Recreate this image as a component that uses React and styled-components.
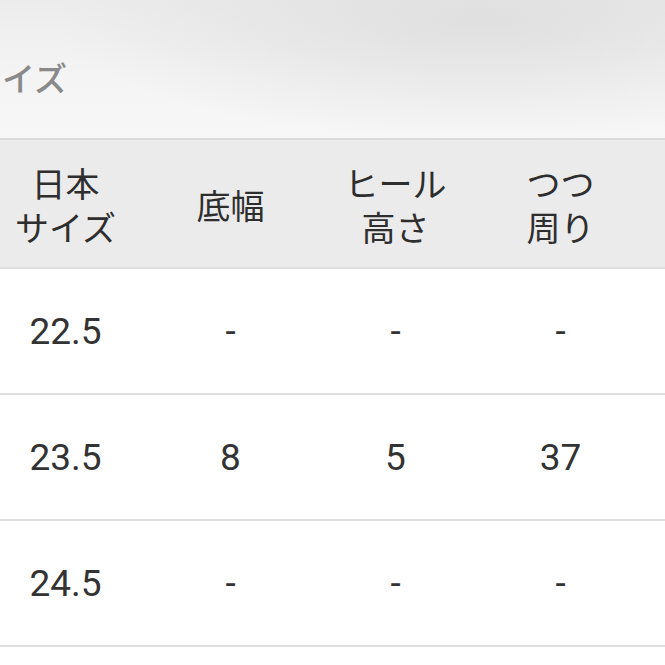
import React from "react";
import styled, { createGlobalStyle } from "styled-components";

const rows = [
  { size: "22.5", width: "-", heel: "-", toe: "-" },
  { size: "23.5", width: "8", heel: "5", toe: "37" },
  { size: "24.5", width: "-", heel: "-", toe: "-" },
];

const GlobalStyle = createGlobalStyle`
  html, body {
    margin: 0;
    padding: 0;
    background: #ffffff;
    overflow: hidden;
  }
  body {
    font-family: Roboto, "Noto Sans CJK JP", sans-serif;
    color: #333333;
  }
`;

const Page = styled.div`
  width: 665px;
  height: 665px;
  overflow: hidden;
  background: #ffffff;
`;

const TitleBar = styled.div`
  height: 140px;
  display: flex;
  align-items: center;
  padding-top: 16px;
  box-sizing: border-box;
  background:
    radial-gradient(ellipse 420px 120px at 480px 20px, rgba(222, 222, 222, 0.9), rgba(222, 222, 222, 0) 100%),
    linear-gradient(to bottom, #ececec 0%, #f4f4f4 55%, #f7f7f7 100%);
  border-bottom: 2px solid #dadada;
`;

const Title = styled.h2`
  margin: 0 0 0 -31px;
  font-family: "Noto Sans CJK JP", sans-serif;
  font-size: 33px;
  font-weight: 500;
  color: #8a8a8a;
`;

const Table = styled.div`
  margin-left: -17px;
  width: 825px;
`;

const Row = styled.div`
  display: grid;
  grid-template-columns: repeat(5, 165px);
  height: ${(p) => (p.$head ? "129px" : "126px")};
  background: ${(p) => (p.$head ? "#ebebeb" : "#ffffff")};
  border-bottom: 2px solid #dedede;
  box-sizing: border-box;
`;

const Cell = styled.div`
  display: flex;
  align-items: center;
  justify-content: center;
  text-align: center;
  font-size: 37px;
  color: #333333;
`;

const HeadCell = styled(Cell)`
  font-family: "Noto Sans CJK JP", sans-serif;
  font-size: 34px;
  line-height: 44px;
  color: #2e2e2e;
  padding-top: 2px;
`;

const App = () => {
  return (
    <Page>
      <GlobalStyle />
      <TitleBar>
        <Title>サイズ</Title>
      </TitleBar>
      <Table>
        <Row $head>
          <HeadCell>
            日本
            <br />
            サイズ
          </HeadCell>
          <HeadCell>底幅</HeadCell>
          <HeadCell>
            ヒール
            <br />
            高さ
          </HeadCell>
          <HeadCell>
            つつ
            <br />
            周り
          </HeadCell>
          <HeadCell />
        </Row>
        {rows.map((r) => (
          <Row key={r.size}>
            <Cell>{r.size}</Cell>
            <Cell>{r.width}</Cell>
            <Cell>{r.heel}</Cell>
            <Cell>{r.toe}</Cell>
            <Cell />
          </Row>
        ))}
      </Table>
    </Page>
  );
};

export default App;
